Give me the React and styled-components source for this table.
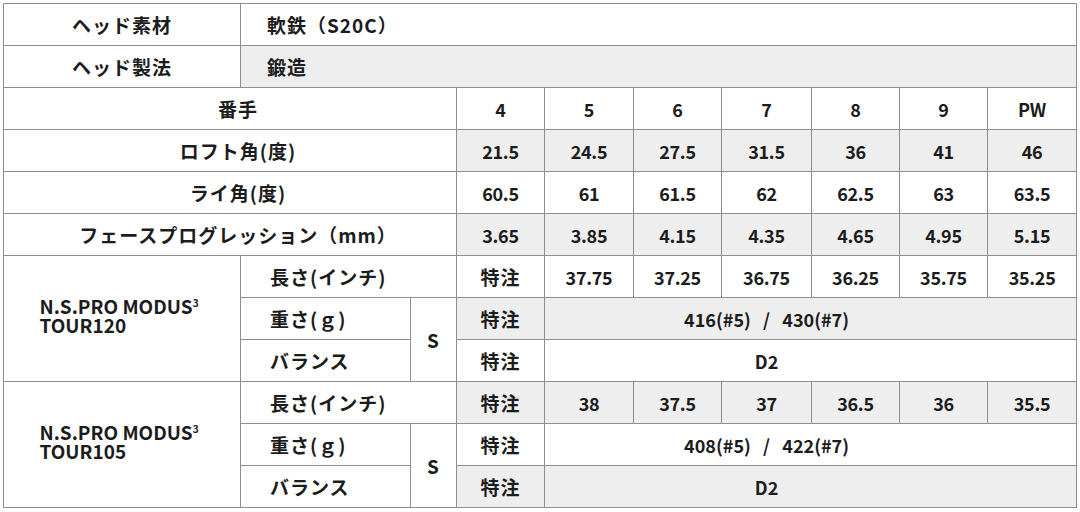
import React from "react";
import styled, { createGlobalStyle } from "styled-components";

const GlobalStyle = createGlobalStyle`
  html, body {
    margin: 0;
    padding: 0;
    background: #ffffff;
  }
  body {
    font-family: "Noto Sans CJK JP", "Noto Sans", sans-serif;
    color: #1c1c1c;
  }
`;

const clubs = ["4", "5", "6", "7", "8", "9", "PW"];

const specRows = [
  { label: "ロフト角(度)", values: ["21.5", "24.5", "27.5", "31.5", "36", "41", "46"], shade: true },
  { label: "ライ角(度)", values: ["60.5", "61", "61.5", "62", "62.5", "63", "63.5"] },
  { label: "フェースプログレッション（mm）", values: ["3.65", "3.85", "4.15", "4.35", "4.65", "4.95", "5.15"], shade: true },
];

const shafts = [
  {
    name: "N.S.PRO MODUS",
    model: "TOUR120",
    lengths: ["37.75", "37.25", "36.75", "36.25", "35.75", "35.25"],
    weight: "416(#5)   /   430(#7)",
    balance: "D2",
    startShaded: false,
  },
  {
    name: "N.S.PRO MODUS",
    model: "TOUR105",
    lengths: ["38", "37.5", "37", "36.5", "36", "35.5"],
    weight: "408(#5)   /   422(#7)",
    balance: "D2",
    startShaded: true,
  },
];

const colWidths = [237, 170, 46, 88, 89, 88, 90, 88, 88, 89];

export default function App() {
  return (
    <Page>
      <GlobalStyle />
      <SpecTable>
        <colgroup>
          {colWidths.map((w, i) => (
            <col key={i} style={{ width: w }} />
          ))}
        </colgroup>
        <tbody>
          <Row>
            <Cell>ヘッド素材</Cell>
            <Cell colSpan={9} $align="left" $pad={26}>
              軟鉄（S20C）
            </Cell>
          </Row>
          <Row>
            <Cell>ヘッド製法</Cell>
            <Cell colSpan={9} $align="left" $pad={26} $shade>
              鍛造
            </Cell>
          </Row>
          <Row>
            <Cell colSpan={3} $pad={16}>
              番手
            </Cell>
            {clubs.map((c) => (
              <Cell key={c} $num>
                {c}
              </Cell>
            ))}
          </Row>
          {specRows.map((r) => (
            <Row key={r.label}>
              <Cell colSpan={3} $pad={16}>
                {r.label}
              </Cell>
              {r.values.map((v, i) => (
                <Cell key={i} $num $shade={r.shade}>
                  {v}
                </Cell>
              ))}
            </Row>
          ))}
          {shafts.map((s) => (
            <React.Fragment key={s.model}>
              <Row>
                <Cell rowSpan={3}>
                  <ShaftName>
                    {s.name}
                    <Sup>3</Sup>
                    <br />
                    {s.model}
                  </ShaftName>
                </Cell>
                <Cell colSpan={2} $align="left" $pad={29}>
                  長さ(インチ)
                </Cell>
                <Cell $shade={s.startShaded}>特注</Cell>
                {s.lengths.map((v, i) => (
                  <Cell key={i} $num $shade={s.startShaded}>
                    {v}
                  </Cell>
                ))}
              </Row>
              <Row>
                <Cell $align="left" $pad={29}>
                  重さ(ｇ)
                </Cell>
                <Cell rowSpan={2}>S</Cell>
                <Cell $shade={!s.startShaded}>特注</Cell>
                <WideCell colSpan={6} $shade={!s.startShaded}>
                  {s.weight}
                </WideCell>
              </Row>
              <Row>
                <Cell $align="left" $pad={29}>
                  バランス
                </Cell>
                <Cell $shade={s.startShaded}>特注</Cell>
                <WideCell colSpan={6} $shade={s.startShaded}>
                  {s.balance}
                </WideCell>
              </Row>
            </React.Fragment>
          ))}
        </tbody>
      </SpecTable>
    </Page>
  );
}

const Page = styled.div`
  width: 1080px;
  height: 512px;
  padding: 3px 0 0 3px;
  box-sizing: border-box;
  overflow: hidden;
`;

const SpecTable = styled.table`
  width: 1074px;
  table-layout: fixed;
  border-collapse: collapse;
  font-size: 19px;
  font-weight: 700;
`;

const Row = styled.tr`
  height: 42px;
`;

const Cell = styled.td`
  border: 1px solid #8e8e8e;
  background: ${(p) => (p.$shade ? "#eeeeee" : "#ffffff")};
  text-align: ${(p) => p.$align || "center"};
  vertical-align: middle;
  padding: 0 0 0 ${(p) => p.$pad || 0}px;
  font-size: ${(p) => (p.$num ? "18px" : "19px")};
  letter-spacing: ${(p) => (p.$num ? "-0.3px" : "1px")};
  line-height: 22px;
  white-space: pre;
`;

const WideCell = styled(Cell)`
  padding: 0 88px 0 0;
  font-size: 18px;
  letter-spacing: 0;
`;

const ShaftName = styled.div`
  display: inline-block;
  text-align: left;
  font-size: 19px;
  line-height: 19px;
  letter-spacing: 0;
  margin: 0 6px 8px 0;
`;

const Sup = styled.sup`
  font-size: 10px;
  line-height: 0;
  vertical-align: 7px;
`;
